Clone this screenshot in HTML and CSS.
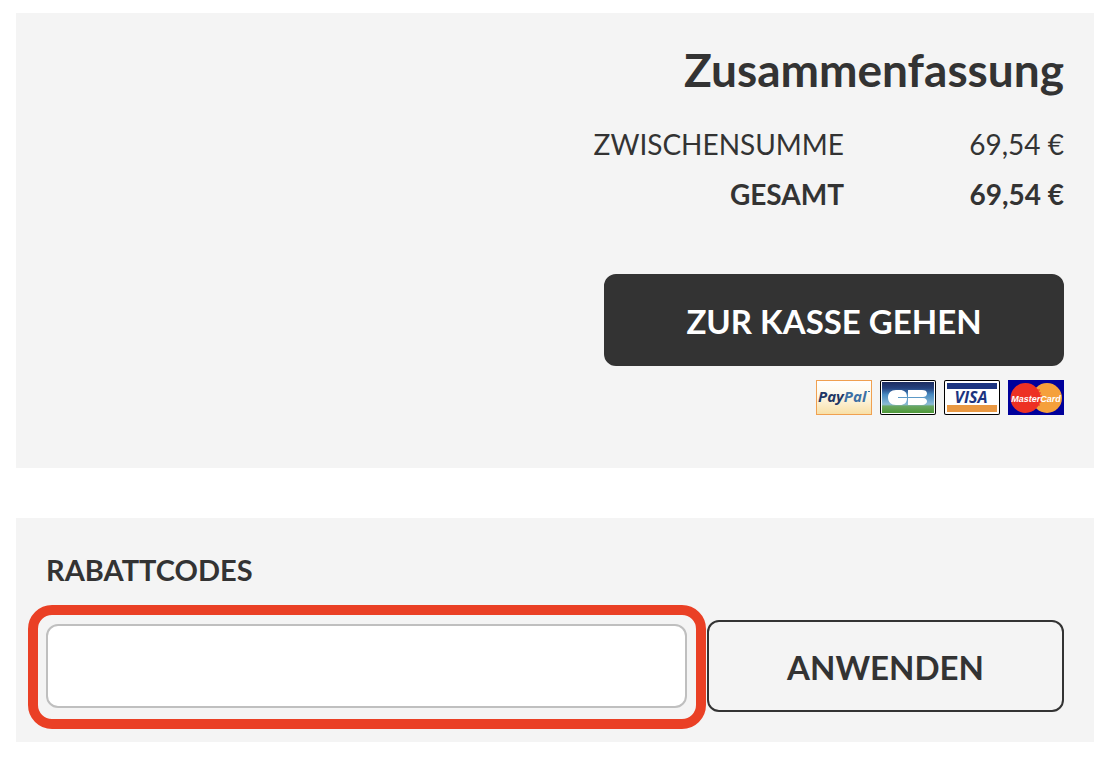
FILE: index.html
```html
<!DOCTYPE html>
<html lang="de">
<head>
<meta charset="utf-8">
<meta name="viewport" content="width=device-width, initial-scale=1">
<title>Warenkorb</title>
<link rel="stylesheet" href="styles.css">
</head>
<body>
<main class="cart">
  <section class="panel summary">
    <h1 class="summary-title">Zusammenfassung</h1>
    <table class="totals">
      <tbody>
        <tr><th scope="row">ZWISCHENSUMME</th><td>69,54 €</td></tr>
        <tr class="grand-total"><th scope="row">GESAMT</th><td>69,54 €</td></tr>
      </tbody>
    </table>
    <button class="button button-primary" type="button">ZUR KASSE GEHEN</button>
    <div class="payments">
      <svg class="payment" viewBox="0 0 56 35" role="img" aria-label="PayPal">
        <defs><linearGradient id="cream" x2="0" y2="1"><stop offset="0" stop-color="#fff"/><stop offset=".45" stop-color="#fdf8e9"/><stop offset="1" stop-color="#f8dfa5"/></linearGradient></defs>
        <rect x=".5" y=".5" width="55" height="34" fill="url(#cream)" stroke="#f0a050"/>
        <text class="paypal-text" x="2" y="22"><tspan fill="#1f3765">Pay</tspan><tspan fill="#3d70a5">Pal</tspan></text>
        <path d="M52 11.500h2" stroke="#3d70a5"/>
      </svg>
      <svg class="payment" viewBox="0 0 56 35" role="img" aria-label="CB">
        <defs><linearGradient id="sky" x2="0" y2="1"><stop offset="0" stop-color="#1c2c60"/><stop offset=".2" stop-color="#24417e"/><stop offset=".4" stop-color="#4789c0"/><stop offset=".72" stop-color="#8bbbd5"/><stop offset=".78" stop-color="#6aa763"/><stop offset="1" stop-color="#4d9838"/></linearGradient></defs>
        <rect width="56" height="35" rx="2" fill="#000"/>
        <rect x="1" y="1" width="54" height="33" rx="1" fill="#fff"/>
        <rect x="2" y="2" width="52" height="31" fill="url(#sky)"/>
        <path fill="#fff" d="M16 10h4c4 0 7 2 7 7H18v1h9c0 5-3 7-7 7h-4c-5 0-8-3-8-7.500S11 10 16 10zM28 10h14c3 0 5 1 5 3.500S45 17 43 17H28zM28 18h15c3 0 4 2 4 3.500S45 25 42 25H28z"/>
      </svg>
      <svg class="payment" viewBox="0 0 56 35" role="img" aria-label="Visa">
        <rect width="56" height="35" rx="2" fill="#000"/>
        <rect x="1" y="1" width="54" height="33" rx="1" fill="#fff"/>
        <path fill="#1c3480" d="M3 3h50v6H3z"/>
        <path fill="#e99842" d="M3 25h50v7H3z"/>
        <text class="visa-text" x="27" y="23" text-anchor="middle">VISA</text>
      </svg>
      <svg class="payment" viewBox="0 0 56 35" role="img" aria-label="MasterCard">
        <path fill="#00009b" d="M0 0h56v35H0z"/>
        <circle cx="39" cy="18" r="15" fill="#f5a03b"/>
        <circle cx="17.500" cy="18" r="15" fill="#ed3124"/>
        <path d="M25 10h7M26 13h7M26 16h8M26 19h8M26 22h7M25 25h7" stroke="#ed3124"/>
        <text class="mastercard-text" x="28" y="22" text-anchor="middle">MasterCard</text>
      </svg>
    </div>
  </section>

  <section class="panel discount">
    <label class="discount-label" for="code">RABATTCODES</label>
    <form class="discount-form">
      <div class="highlight"><input class="code-input" id="code" name="code" type="text"></div>
      <button class="button button-outline" type="button">ANWENDEN</button>
    </form>
  </section>
</main>
</body>
</html>
```
FILE: styles.css
```css
* { box-sizing: border-box; }

body {
  margin: 0;
  background: #fff;
  color: #333;
  font-family: Lato, "Open Sans", sans-serif;
}

.cart {
  display: flex;
  flex-direction: column;
  gap: 50px;
  padding: 13px 18px 16px 16px;
}

.panel {
  display: flex;
  flex-direction: column;
  padding: 30px;
  background: #f4f4f4;
}

.summary {
  align-items: flex-end;
  padding-bottom: 53px;
}

.summary-title {
  margin: 0 0 22px;
  font-size: 46px;
  line-height: 54px;
}

.totals {
  border-collapse: collapse;
  font-size: 28px;
  line-height: 50px;
  text-align: right;
}

.totals th,
.totals td {
  padding: 0;
  font-weight: 400;
}

.totals td { width: 220px; }

.totals .grand-total th,
.totals .grand-total td { font-weight: 700; }

.button {
  height: 92px;
  padding: 2px 16px 0;
  border: 2px solid #333;
  border-radius: 12px;
  font-family: inherit;
  font-size: 33px;
  font-weight: 700;
}

.button-primary {
  width: 460px;
  max-width: 100%;
  margin-top: 55px;
  background: #333;
  color: #fff;
}

.payments {
  display: flex;
  gap: 8px;
  margin-top: 14px;
}

.payment {
  width: 56px;
  height: 35px;
}

.paypal-text,
.visa-text,
.mastercard-text {
  font-family: "Open Sans", sans-serif;
  font-style: italic;
  font-weight: 700;
}

.paypal-text { font-size: 15px; }

.visa-text {
  fill: #1c3480;
  font-size: 16px;
}

.mastercard-text {
  fill: #fff;
  font-family: "Liberation Sans", sans-serif;
  font-size: 9px;
}

.discount { padding-bottom: 13px; }

.discount-label {
  font-size: 29px;
  font-weight: 700;
  line-height: 44px;
}

.discount-form {
  display: flex;
  align-items: center;
  gap: 1px;
  margin-top: 13px;
  margin-left: -18px;
}

.highlight {
  display: flex;
  flex: 1;
  min-width: 0;
  padding: 9px 9px 11px 8px;
  border: 10px solid #ea4025;
  border-radius: 24px;
}

.code-input {
  width: 100%;
  height: 84px;
  padding: 0 20px;
  border: 2px solid #bfbfbf;
  border-radius: 12px;
  background: #fff;
  color: inherit;
  font: inherit;
  font-size: 28px;
}

.button-outline {
  width: 357px;
  margin-bottom: 2px;
  background: transparent;
  color: #333;
}
```
